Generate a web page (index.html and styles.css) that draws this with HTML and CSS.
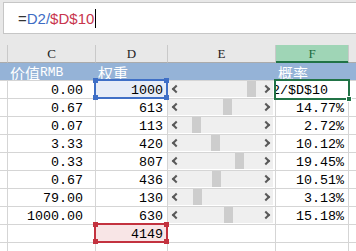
FILE: index.html
```html
<!DOCTYPE html>
<html lang="zh-CN">
<head>
    <meta charset="UTF-8">
    <meta name="viewport" content="width=device-width, initial-scale=1.0">
    <title>权重与概率</title>
    <link rel="stylesheet" href="styles.css">
</head>
<body>

<!-- Formula bar -->
<div class="formula-bar">
    <div class="formula-input">
        <span class="f-eq">=</span><span class="f-ref1">D2/</span><span class="f-ref2">$D$10</span><span class="caret"></span>
    </div>
</div>

<div class="sheet">
    <!-- Column letters -->
    <div class="row col-heads">
        <div class="ch"></div>
        <div class="ch">C</div>
        <div class="ch">D</div>
        <div class="ch">E</div>
        <div class="ch active">F</div>
        <div class="ch"></div>
    </div>

    <!-- Title row -->
    <div class="row title-row">
        <div class="cell"></div>
        <div class="cell">价值<span class="latin">RMB</span></div>
        <div class="cell">权重</div>
        <div class="cell"></div>
        <div class="cell">概率</div>
        <div class="cell"></div>
    </div>

    <div class="row data">
        <div class="cell"></div>
        <div class="cell num c-val">0.00</div>
        <div class="cell num ref-blue">1000
            <span class="frame blue"><i class="h tl"></i><i class="h tr"></i><i class="h bl"></i><i class="h br"></i></span>
        </div>
        <div class="cell bar-cell">
            <div class="scroll"><span class="arrow left"></span><div class="track"><div class="thumb" style="margin-left:64px"></div></div><span class="arrow right"></span></div>
        </div>
        <div class="cell editing">
            <div class="edit-clip"><span>=D2/$D$10</span></div>
            <span class="frame green"><i class="fill-handle"></i></span>
        </div>
        <div class="cell"></div>
    </div>

    <div class="row data">
        <div class="cell"></div>
        <div class="cell num c-val">0.67</div>
        <div class="cell num">613</div>
        <div class="cell bar-cell">
            <div class="scroll"><span class="arrow left"></span><div class="track"><div class="thumb" style="margin-left:40px"></div></div><span class="arrow right"></span></div>
        </div>
        <div class="cell num">14.77%</div>
        <div class="cell"></div>
    </div>

    <div class="row data">
        <div class="cell"></div>
        <div class="cell num c-val">0.07</div>
        <div class="cell num">113</div>
        <div class="cell bar-cell">
            <div class="scroll"><span class="arrow left"></span><div class="track"><div class="thumb" style="margin-left:9px"></div></div><span class="arrow right"></span></div>
        </div>
        <div class="cell num">2.72%</div>
        <div class="cell"></div>
    </div>

    <div class="row data">
        <div class="cell"></div>
        <div class="cell num c-val">3.33</div>
        <div class="cell num">420</div>
        <div class="cell bar-cell">
            <div class="scroll"><span class="arrow left"></span><div class="track"><div class="thumb" style="margin-left:28px"></div></div><span class="arrow right"></span></div>
        </div>
        <div class="cell num">10.12%</div>
        <div class="cell"></div>
    </div>

    <div class="row data">
        <div class="cell"></div>
        <div class="cell num c-val">0.33</div>
        <div class="cell num">807</div>
        <div class="cell bar-cell">
            <div class="scroll"><span class="arrow left"></span><div class="track"><div class="thumb" style="margin-left:52px"></div></div><span class="arrow right"></span></div>
        </div>
        <div class="cell num">19.45%</div>
        <div class="cell"></div>
    </div>

    <div class="row data">
        <div class="cell"></div>
        <div class="cell num c-val">0.67</div>
        <div class="cell num">436</div>
        <div class="cell bar-cell">
            <div class="scroll"><span class="arrow left"></span><div class="track"><div class="thumb" style="margin-left:29px"></div></div><span class="arrow right"></span></div>
        </div>
        <div class="cell num">10.51%</div>
        <div class="cell"></div>
    </div>

    <div class="row data">
        <div class="cell"></div>
        <div class="cell num c-val">79.00</div>
        <div class="cell num">130</div>
        <div class="cell bar-cell">
            <div class="scroll"><span class="arrow left"></span><div class="track"><div class="thumb" style="margin-left:10px"></div></div><span class="arrow right"></span></div>
        </div>
        <div class="cell num">3.13%</div>
        <div class="cell"></div>
    </div>

    <div class="row data">
        <div class="cell"></div>
        <div class="cell num c-val">1000.00</div>
        <div class="cell num">630</div>
        <div class="cell bar-cell">
            <div class="scroll"><span class="arrow left"></span><div class="track"><div class="thumb" style="margin-left:41px"></div></div><span class="arrow right"></span></div>
        </div>
        <div class="cell num">15.18%</div>
        <div class="cell"></div>
    </div>

    <!-- Sum row -->
    <div class="row data">
        <div class="cell"></div>
        <div class="cell"></div>
        <div class="cell num ref-red">4149
            <span class="frame red"><i class="h tl"></i><i class="h tr"></i><i class="h bl"></i><i class="h br"></i></span>
        </div>
        <div class="cell"></div>
        <div class="cell"></div>
        <div class="cell"></div>
    </div>

    <div class="row data">
        <div class="cell"></div>
        <div class="cell"></div>
        <div class="cell"></div>
        <div class="cell"></div>
        <div class="cell"></div>
        <div class="cell"></div>
    </div>
</div>

</body>
</html>
```

FILE: styles.css
```css
* {
    box-sizing: border-box;
}
body {
    margin: 0;
    background-color: #fff;
    font-family: "Liberation Mono", monospace;
    width: 356px;
    height: 251px;
    overflow: hidden;
}

/* formula bar */
.formula-bar {
    height: 34px;
    padding: 2px 0 0 3px;
    background-color: #e8e8e8;
}
.formula-input {
    height: 32px;
    background-color: #fff;
    border: 1px solid #c6c6c6;
    border-right: none;
    display: flex;
    align-items: center;
    padding-left: 14px;
    font-family: "Liberation Sans", Arial, sans-serif;
    font-size: 15px;
}
.f-eq {
    color: #333;
}
.f-ref1 {
    color: #3d6cc4;
}
.f-ref2 {
    color: #c8354d;
}
.caret {
    width: 1px;
    height: 19px;
    margin-left: 1px;
    background-color: #000;
}

/* sheet */
.sheet {
    background-color: #e8e8e8;
    padding-top: 11px;
}
.row {
    display: grid;
    grid-template-columns: 8px 88px 72px 108px 73px 8px;
    height: 18px;
}
.ch {
    border-right: 1px solid #c9c9c9;
    border-bottom: 1px solid #ababab;
    font-family: "Liberation Serif", serif;
    font-size: 13px;
    line-height: 17px;
    text-align: center;
    color: #222;
}
.ch.active {
    background-color: #9fd5b6;
    color: #1b6a3f;
    border-bottom-color: #217346;
    box-shadow: inset 0 -1px 0 #217346;
}

.title-row {
    height: 17px;
    background-color: #95b3d7;
    color: #fff;
    font-family: "Noto Sans CJK SC", sans-serif;
    font-size: 15px;
}
.title-row .cell {
    display: flex;
    align-items: flex-end;
    padding-left: 2px;
    line-height: 15px;
}
.latin {
    font-family: "Liberation Mono", monospace;
    font-size: 13px;
    line-height: 14px;
}

.data {
    background-color: #fff;
}
.data .cell {
    position: relative;
    border-right: 1px solid #d5d5d5;
    border-top: 1px solid #d5d5d5;
}
.num {
    display: flex;
    justify-content: flex-end;
    align-items: flex-end;
    padding-right: 4px;
    font-size: 13.33px;
    line-height: 14px;
    color: #000;
}
.c-val {
    padding-right: 12px;
}

/* scroll bar controls in column E */
.scroll {
    display: flex;
    align-items: center;
    width: 105px;
    height: 16px;
    background-color: #efefef;
}
.arrow {
    width: 15px;
    height: 16px;
    display: flex;
    align-items: center;
    justify-content: center;
}
.arrow::before {
    content: "";
    width: 4px;
    height: 4px;
    border-left: 2px solid #595959;
    border-bottom: 2px solid #595959;
    transform: rotate(45deg);
}
.arrow.right::before {
    transform: rotate(-135deg);
}
.track {
    flex: 1;
    height: 16px;
}
.thumb {
    width: 9px;
    height: 16px;
    background-color: #cdcdcd;
}

/* referenced and active cells */
.ref-blue {
    background-color: #e6ecf7;
}
.ref-red {
    background-color: #f8e5e6;
}
.frame {
    position: absolute;
    top: -2px;
    left: -2px;
    right: -1px;
    bottom: -1px;
    border: 2px solid;
    z-index: 2;
}
.frame.blue {
    border-color: #3f6fc6;
}
.frame.red {
    border-color: #c3323f;
}
.frame.green {
    border-color: #217346;
    right: -2px;
    bottom: -2px;
}
.h {
    position: absolute;
    width: 5px;
    height: 5px;
}
.blue .h {
    background-color: #3f6fc6;
}
.red .h {
    background-color: #c3323f;
}
.tl { top: -3px; left: -3px; }
.tr { top: -3px; right: -3px; }
.bl { bottom: -3px; left: -3px; }
.br { bottom: -3px; right: -3px; }
.fill-handle {
    position: absolute;
    right: -4px;
    bottom: -4px;
    width: 6px;
    height: 6px;
    background-color: #217346;
    border: 1px solid #fff;
}

.editing {
    display: flex;
    align-items: flex-end;
    font-size: 13.33px;
    line-height: 14px;
}
.edit-clip {
    flex: 1;
    overflow: hidden;
    white-space: nowrap;
}
.edit-clip span {
    display: inline-block;
    margin-left: -20px;
}
```
